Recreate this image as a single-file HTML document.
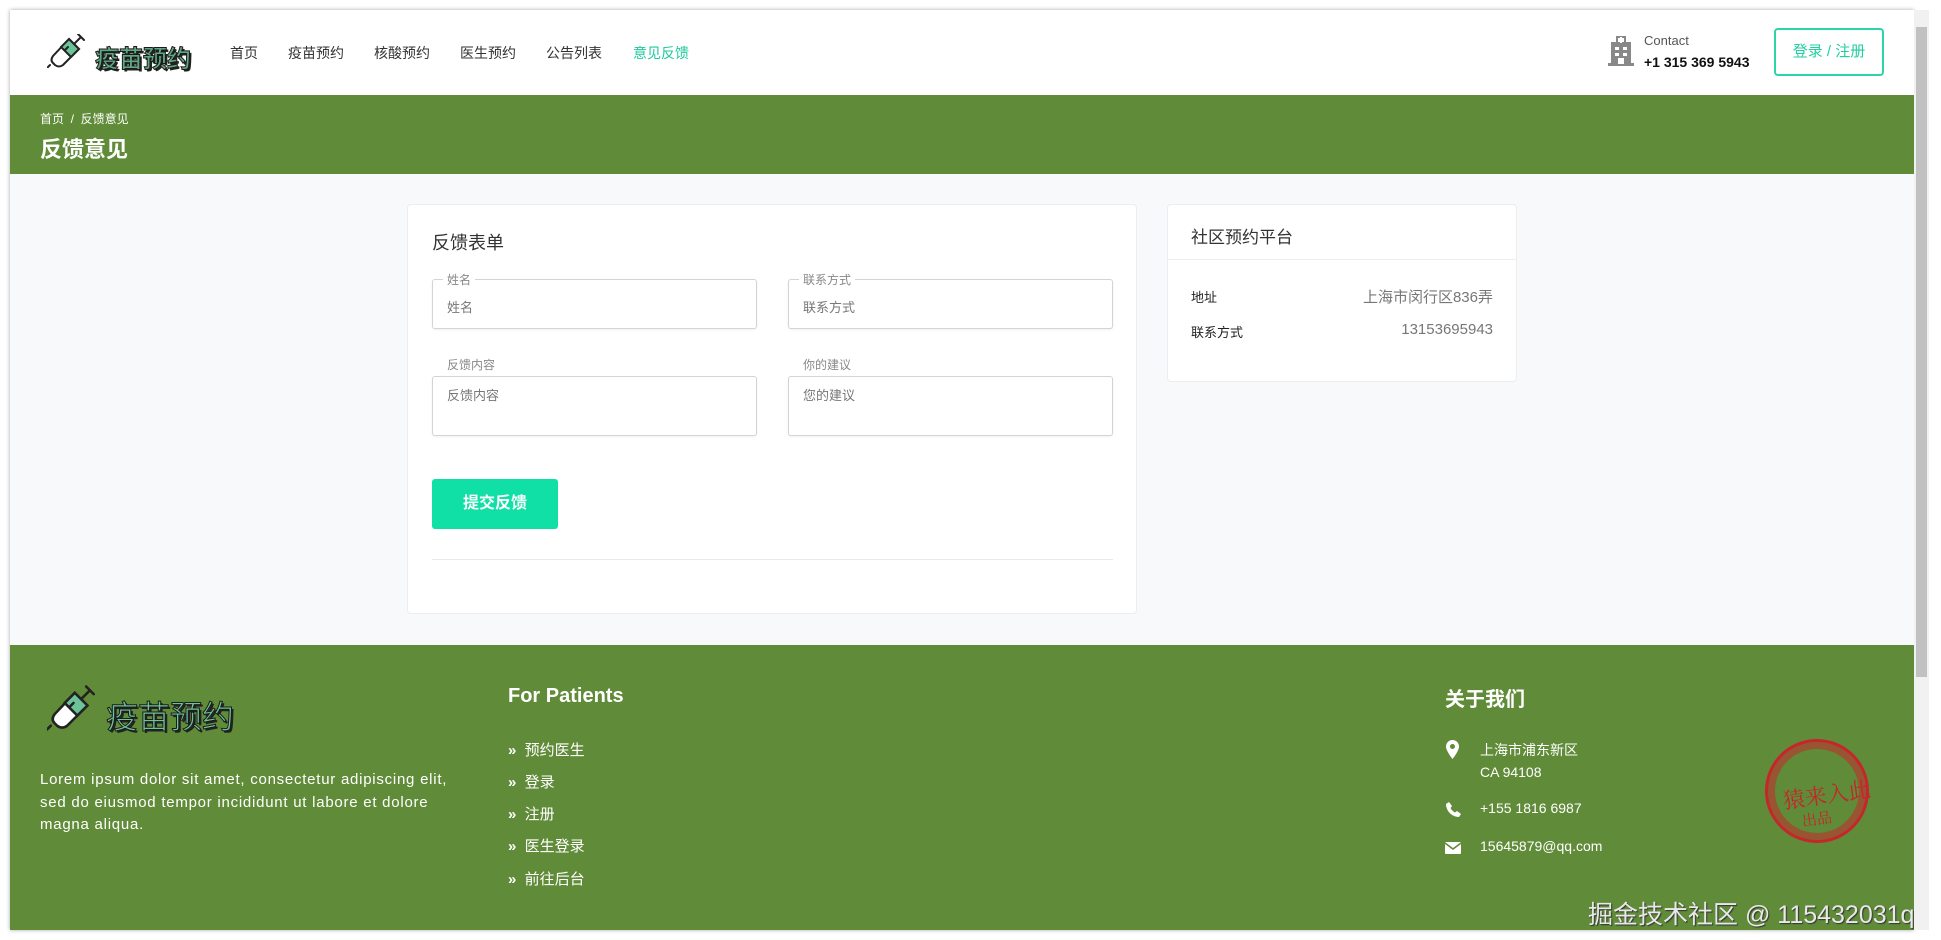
<!DOCTYPE html>
<html><head><meta charset="utf-8">
<style>
*{margin:0;padding:0;box-sizing:border-box}
body{width:1941px;height:940px;background:#fff;font-family:"Liberation Sans","Noto Sans CJK SC",sans-serif;position:relative;overflow:hidden;color:#333}
.abs{position:absolute}
.frame{position:absolute;left:10px;top:10px;width:1904px;height:920px;background:#f8f9fa;box-shadow:0 0 4px rgba(0,0,0,.35);overflow:hidden}
.hdr{position:absolute;left:0;top:0;width:1904px;height:85px;background:#fff}
.nav{position:absolute;top:33px;font-size:14px;color:#333;white-space:nowrap}
.green{background:#608b38}
.logo-t{font-weight:bold;color:#5fa883;-webkit-text-stroke:1px #1b1b1b;text-shadow:2px 2px 0 #222;white-space:nowrap}
.card{position:absolute;background:#fff;border:1px solid #ebedf0;border-radius:4px}
.inp{position:absolute;border:1px solid #d4d4d4;border-radius:3px;background:#fff;box-shadow:0 1px 2px rgba(0,0,0,.06)}
.lg{position:absolute;font-size:12px;color:#888;background:#fff;padding:0 4px;line-height:14px}
.ph{position:absolute;font-size:13px;color:#777}
.fl{position:absolute;font-size:15px;color:#fff;white-space:nowrap}
</style></head><body>
<div class="frame">
 <div class="hdr">
  <svg class="abs" style="left:37px;top:24px" width="38" height="34" viewBox="0 0 38 34">
   <g fill="none" stroke="#222" stroke-width="2" stroke-linecap="round">
    <path d="M22 5 L32 15 L16 31 Q12 34 8 31 L6 29 Q3 26 6 22 Z" fill="#fff"/>
    <path d="M22 5 L32 15 L24 23 L14 13 Z" fill="#6cc39a"/>
    <path d="M27 10 L34 3 M31 0 L37 6 M3 31 L0 34"/>
    <path d="M18 16 L21 13"/>
   </g>
  </svg>
  <div class="abs logo-t" style="left:85px;top:29px;font-size:24px">疫苗预约</div>
  <div class="nav" style="left:220px">首页</div>
  <div class="nav" style="left:278px">疫苗预约</div>
  <div class="nav" style="left:364px">核酸预约</div>
  <div class="nav" style="left:450px">医生预约</div>
  <div class="nav" style="left:536px">公告列表</div>
  <div class="nav" style="left:623px;color:#1fc99d">意见反馈</div>
  <svg class="abs" style="left:1598px;top:25px" width="26" height="31" viewBox="0 0 26 31">
   <g fill="#888"><rect x="3" y="7" width="20" height="22"/><rect x="0" y="28" width="26" height="3"/><rect x="8" y="1" width="10" height="8" fill="#888"/></g>
   <rect x="10" y="3" width="6" height="4" fill="#fff"/><rect x="12" y="2" width="2" height="6" fill="#fff"/><rect x="11" y="4" width="4" height="2" fill="#fff"/>
   <g fill="#fff"><rect x="7" y="12" width="4" height="3"/><rect x="15" y="12" width="4" height="3"/><rect x="7" y="18" width="4" height="3"/><rect x="15" y="18" width="4" height="3"/><rect x="10" y="23" width="6" height="6"/></g>
  </svg>
  <div class="abs" style="left:1634px;top:23px;font-size:13px;color:#555">Contact</div>
  <div class="abs" style="left:1634px;top:44px;font-size:14px;color:#111;font-weight:bold">+1 315 369 5943</div>
  <div class="abs" style="left:1764px;top:18px;width:110px;height:48px;border:2px solid #2ad6a8;border-radius:4px;color:#22cfa0;font-size:15px;text-align:center;line-height:44px">登录 / 注册</div>
 </div>
 <div class="abs green" style="left:0;top:85px;width:1904px;height:79px">
  <div class="abs" style="left:30px;top:15px;font-size:12px;color:#fff">首页 &nbsp;/&nbsp; 反馈意见</div>
  <div class="abs" style="left:30px;top:37px;font-size:22px;color:#fff;font-weight:bold">反馈意见</div>
 </div>

 <div class="card" style="left:397px;top:194px;width:730px;height:410px">
  <div class="abs" style="left:24px;top:24px;font-size:18px;color:#333">反馈表单</div>
  <div class="inp" style="left:24px;top:74px;width:325px;height:50px"></div>
  <div class="lg" style="left:35px;top:68px">姓名</div>
  <div class="ph" style="left:39px;top:92px">姓名</div>
  <div class="inp" style="left:380px;top:74px;width:325px;height:50px"></div>
  <div class="lg" style="left:391px;top:68px">联系方式</div>
  <div class="ph" style="left:395px;top:92px">联系方式</div>
  <div class="lg" style="left:35px;top:153px;background:none">反馈内容</div>
  <div class="inp" style="left:24px;top:171px;width:325px;height:60px"></div>
  <div class="ph" style="left:39px;top:180px">反馈内容</div>
  <div class="lg" style="left:391px;top:153px;background:none">你的建议</div>
  <div class="inp" style="left:380px;top:171px;width:325px;height:60px"></div>
  <div class="ph" style="left:395px;top:180px">您的建议</div>
  <div class="abs" style="left:24px;top:274px;width:126px;height:50px;background:#10e0a6;border-radius:3px;color:#fff;font-size:16px;font-weight:bold;text-align:center;line-height:50px">提交反馈</div>
  <div class="abs" style="left:24px;top:354px;width:681px;height:1px;background:#e8e8e8"></div>
 </div>

 <div class="card" style="left:1157px;top:194px;width:350px;height:178px">
  <div class="abs" style="left:23px;top:18px;font-size:17px;color:#333">社区预约平台</div>
  <div class="abs" style="left:0;top:54px;width:348px;height:1px;background:#eee"></div>
  <div class="abs" style="left:23px;top:82px;font-size:13px;color:#222">地址</div>
  <div class="abs" style="right:23px;top:81px;font-size:15px;color:#777">上海市闵行区836弄</div>
  <div class="abs" style="left:23px;top:117px;font-size:13px;color:#222">联系方式</div>
  <div class="abs" style="right:23px;top:116px;font-size:15px;color:#777">13153695943</div>
 </div>

 <div class="abs green" style="left:0;top:635px;width:1904px;height:285px">
  <svg class="abs" style="left:37px;top:40px" width="48" height="46" viewBox="0 0 38 34">
   <g fill="none" stroke="#222" stroke-width="2" stroke-linecap="round">
    <path d="M22 5 L32 15 L16 31 Q12 34 8 31 L6 29 Q3 26 6 22 Z" fill="#fff"/>
    <path d="M22 5 L32 15 L24 23 L14 13 Z" fill="#6cc39a"/>
    <path d="M27 10 L34 3 M31 0 L37 6 M3 31 L0 34"/>
    <path d="M18 16 L21 13"/>
   </g>
  </svg>
  <div class="abs" style="left:96px;top:47px;font-size:32px;color:#6cc39a;-webkit-text-stroke:1px #1b1b1b;text-shadow:2px 2px 0 #222;white-space:nowrap">疫苗预约</div>
  <div class="abs" style="left:30px;top:124px;font-size:15px;letter-spacing:0.75px;line-height:22.5px;color:#fff;white-space:nowrap">Lorem ipsum dolor sit amet, consectetur adipiscing elit,<br>sed do eiusmod tempor incididunt ut labore et dolore<br>magna aliqua.</div>
  <div class="abs" style="left:498px;top:40px;font-size:20px;font-weight:bold;color:#fff">For Patients</div>
  <div class="fl" style="left:498px;top:94px"><b>»</b>&nbsp; 预约医生</div>
  <div class="fl" style="left:498px;top:126px"><b>»</b>&nbsp; 登录</div>
  <div class="fl" style="left:498px;top:158px"><b>»</b>&nbsp; 注册</div>
  <div class="fl" style="left:498px;top:190px"><b>»</b>&nbsp; 医生登录</div>
  <div class="fl" style="left:498px;top:223px"><b>»</b>&nbsp; 前往后台</div>
  <div class="abs" style="left:1435px;top:38px;font-size:20px;font-weight:bold;color:#fff">关于我们</div>
  <svg class="abs" style="left:1436px;top:95px" width="13" height="19" viewBox="0 0 13 19"><path d="M6.5 0C2.9 0 0 2.9 0 6.5 0 11 6.5 19 6.5 19S13 11 13 6.5C13 2.9 10.1 0 6.5 0z" fill="#fff"/><circle cx="6.5" cy="6.5" r="2.5" fill="#608b38"/></svg>
  <div class="fl" style="left:1470px;top:94px;font-size:14px;line-height:22px">上海市浦东新区<br>CA 94108</div>
  <svg class="abs" style="left:1436px;top:157px" width="15" height="15" viewBox="0 0 15 15"><path d="M3 0L6 4 4.5 6C5.5 8 7 9.5 9 10.5L11 9 15 12 13 15C6 15 0 9 0 2Z" fill="#fff"/></svg>
  <div class="fl" style="left:1470px;top:155px;font-size:14px">+155 1816 6987</div>
  <svg class="abs" style="left:1435px;top:197px" width="16" height="12" viewBox="0 0 16 12"><rect width="16" height="12" rx="1" fill="#fff"/><path d="M0 1L8 7 16 1" stroke="#608b38" stroke-width="1.5" fill="none"/></svg>
  <div class="fl" style="left:1470px;top:193px;font-size:14px">15645879@qq.com</div>
  <div class="abs" style="left:1755px;top:94px;width:104px;height:104px;border:3px solid #c6262b;border-radius:50%;box-shadow:inset 0 0 0 7px #c6262b88;transform:rotate(-8deg)">
   <div class="abs" style="left:14px;top:38px;font-size:22px;color:#c6262b;font-family:'Noto Serif CJK SC',serif;white-space:nowrap">猿来入此</div>
   <div class="abs" style="left:30px;top:66px;font-size:15px;color:#c6262b;font-family:'Noto Serif CJK SC',serif">出品</div>
  </div>
  <div class="abs" style="left:1578px;top:250px;font-size:25px;color:#e8e8e8;text-shadow:1px 1px 1px #333;white-space:nowrap">掘金技术社区 @ 115432031q</div>
 </div>
</div>
<div class="abs" style="left:1914px;top:10px;width:15px;height:920px;background:#f1f1f1"></div>
<div class="abs" style="left:1916px;top:27px;width:11px;height:650px;background:#c1c1c1"></div>
</body></html>
